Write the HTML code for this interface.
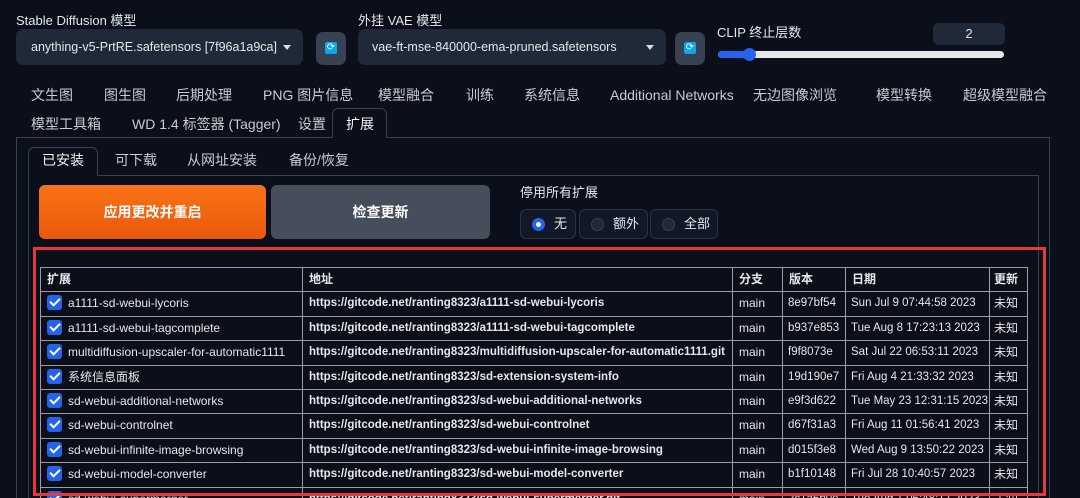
<!DOCTYPE html>
<html><head><meta charset="utf-8"><style>
*{box-sizing:border-box;margin:0;padding:0}
html,body{width:1080px;height:498px;overflow:hidden}
body{background:#0b0f19;color:#e5e7eb;font-family:"Liberation Sans","Noto Sans CJK SC",sans-serif;position:relative;font-size:13px;line-height:1.2}
.a{position:absolute;white-space:nowrap}
.dd{position:absolute;background:#1f2937;border-radius:7px;height:36px;top:29px;font-size:12.5px;line-height:36px;color:#e5e7eb;padding-left:15px}
.dd .car{position:absolute;right:12px;top:16px;width:0;height:0;border-left:4px solid transparent;border-right:4px solid transparent;border-top:5px solid #ddd}
.rf{position:absolute;top:32px;width:30px;height:33px;background:#374151;border-radius:7px}
.rf i{position:absolute;left:9px;top:10px;width:12px;height:12px;background:#0ea5e9;border-radius:2px;color:#fff;font-size:10px;line-height:12px;text-align:center;font-style:normal}
.tab{position:absolute;font-size:14px;color:#c9ccd1}
table{position:absolute;left:40px;top:267px;border-collapse:collapse;font-size:12px;color:#e5e7eb;table-layout:fixed;width:987px}
td,th{border:1px solid #9a9ea6;height:24.4px;padding:0 6px;text-align:left;white-space:nowrap;overflow:hidden;vertical-align:top;line-height:23px;font-family:"Liberation Sans",sans-serif}
td:first-child,th,td.z{font-family:"Liberation Sans","Noto Sans CJK SC",sans-serif}
th{font-weight:bold}
td.u{font-weight:bold;font-size:11.5px}
td.s{font-size:11.5px;padding:0 5px}
td.z{padding:0 4px}
.cb{display:inline-block;width:15px;height:15px;background:#2563eb;border-radius:3px;vertical-align:-3px;margin-right:6px;position:relative}
.cb:after{content:"";position:absolute;left:5px;top:1px;width:4px;height:8px;border:solid #fff;border-width:0 2px 2px 0;transform:rotate(45deg)}
.radio{position:absolute;top:209px;height:30px;background:#111827;border:1px solid #2b3341;border-radius:6px}
.radio .c{position:absolute;left:11px;top:8px;width:13px;height:13px;border-radius:50%;background:#1f2937;border:1px solid #374151}
.radio span{position:absolute;left:33px;top:6px;font-size:13px}
</style></head><body>
<div class="a" style="left:16px;top:13px;font-size:13px">Stable Diffusion 模型</div>
<div class="dd" style="left:16px;width:287px">anything-v5-PrtRE.safetensors [7f96a1a9ca]<span class="car"></span></div>
<div class="rf" style="left:316px"><i>⟳</i></div>
<div class="a" style="left:358px;top:13px;font-size:13px">外挂 VAE 模型</div>
<div class="dd" style="left:358px;width:308px;padding-left:14px">vae-ft-mse-840000-ema-pruned.safetensors<span class="car"></span></div>
<div class="rf" style="left:675px"><i>⟳</i></div>
<div class="a" style="left:717px;top:25px;font-size:13px">CLIP 终止层数</div>
<div class="a" style="left:933px;top:23px;width:72px;height:22px;background:#1f2937;border-radius:6px;text-align:center;line-height:22px;font-size:13px">2</div>
<div class="a" style="left:718px;top:51px;width:286px;height:7px;background:#e5e7eb;border-radius:4px"></div>
<div class="a" style="left:718px;top:51px;width:32px;height:7px;background:#2563eb;border-radius:4px"></div>
<div class="a" style="left:743px;top:48px;width:13px;height:13px;background:#2563eb;border-radius:50%"></div>

<div class="tab" style="left:31px;top:87px">文生图</div>
<div class="tab" style="left:104px;top:87px">图生图</div>
<div class="tab" style="left:176px;top:87px">后期处理</div>
<div class="tab" style="left:263px;top:87px">PNG 图片信息</div>
<div class="tab" style="left:378px;top:87px">模型融合</div>
<div class="tab" style="left:466px;top:87px">训练</div>
<div class="tab" style="left:524px;top:87px">系统信息</div>
<div class="tab" style="left:610px;top:87px">Additional Networks</div>
<div class="tab" style="left:753px;top:87px">无边图像浏览</div>
<div class="tab" style="left:876px;top:87px">模型转换</div>
<div class="tab" style="left:963px;top:87px">超级模型融合</div>
<div class="tab" style="left:31px;top:116px">模型工具箱</div>
<div class="tab" style="left:132px;top:116px">WD 1.4 标签器 (Tagger)</div>
<div class="tab" style="left:298px;top:116px">设置</div>
<div class="a" style="left:16px;top:137px;width:1034px;height:370px;border:1px solid #374151"></div>
<div class="a" style="left:332px;top:108px;width:55px;height:30px;border:1px solid #374151;border-bottom:none;border-radius:6px 6px 0 0;background:#0b0f19"></div>
<div class="tab" style="left:346px;top:116px;color:#f3f4f6">扩展</div>

<div class="a" style="left:28px;top:175px;width:1011px;height:330px;border:1px solid #374151"></div>
<div class="a" style="left:28px;top:147px;width:70px;height:29px;border:1px solid #374151;border-bottom:none;border-radius:6px 6px 0 0;background:#0b0f19"></div>
<div class="tab" style="left:42px;top:152px;color:#f3f4f6">已安装</div>
<div class="tab" style="left:115px;top:152px">可下载</div>
<div class="tab" style="left:187px;top:152px">从网址安装</div>
<div class="tab" style="left:289px;top:152px">备份/恢复</div>

<div class="a" style="left:39px;top:185px;width:227px;height:54px;border-radius:6px;background:linear-gradient(180deg,#f97316,#ea580c);color:#fff;font-weight:bold;font-size:14px;text-align:center;line-height:54px">应用更改并重启</div>
<div class="a" style="left:271px;top:185px;width:219px;height:54px;border-radius:6px;background:#474e5b;color:#fff;font-weight:bold;font-size:14px;text-align:center;line-height:54px">检查更新</div>
<div class="a" style="left:520px;top:185px;font-size:13px">停用所有扩展</div>
<div class="radio" style="left:520px;width:56px"><div class="c" style="background:#fff;border:4px solid #2563eb"></div><span>无</span></div>
<div class="radio" style="left:579px;width:69px"><div class="c"></div><span>额外</span></div>
<div class="radio" style="left:650px;width:68px"><div class="c"></div><span>全部</span></div>

<table>
<colgroup><col style="width:262px"><col style="width:430px"><col style="width:50px"><col style="width:63px"><col style="width:144px"><col style="width:38px"></colgroup>
<tr><th>扩展</th><th>地址</th><th>分支</th><th>版本</th><th>日期</th><th style="padding:0 4px">更新</th></tr>
<tr><td><span class="cb"></span>a1111-sd-webui-lycoris</td><td class="u">https://gitcode.net/ranting8323/a1111-sd-webui-lycoris</td><td>main</td><td class="s">8e97bf54</td><td class="s">Sun Jul 9 07:44:58 2023</td><td class="z">未知</td></tr>
<tr><td><span class="cb"></span>a1111-sd-webui-tagcomplete</td><td class="u">https://gitcode.net/ranting8323/a1111-sd-webui-tagcomplete</td><td>main</td><td class="s">b937e853</td><td class="s">Tue Aug 8 17:23:13 2023</td><td class="z">未知</td></tr>
<tr><td><span class="cb"></span>multidiffusion-upscaler-for-automatic1111</td><td class="u">https://gitcode.net/ranting8323/multidiffusion-upscaler-for-automatic1111.git</td><td>main</td><td class="s">f9f8073e</td><td class="s">Sat Jul 22 06:53:11 2023</td><td class="z">未知</td></tr>
<tr><td><span class="cb"></span>系统信息面板</td><td class="u">https://gitcode.net/ranting8323/sd-extension-system-info</td><td>main</td><td class="s">19d190e7</td><td class="s">Fri Aug 4 21:33:32 2023</td><td class="z">未知</td></tr>
<tr><td><span class="cb"></span>sd-webui-additional-networks</td><td class="u">https://gitcode.net/ranting8323/sd-webui-additional-networks</td><td>main</td><td class="s">e9f3d622</td><td class="s">Tue May 23 12:31:15 2023</td><td class="z">未知</td></tr>
<tr><td><span class="cb"></span>sd-webui-controlnet</td><td class="u">https://gitcode.net/ranting8323/sd-webui-controlnet</td><td>main</td><td class="s">d67f31a3</td><td class="s">Fri Aug 11 01:56:41 2023</td><td class="z">未知</td></tr>
<tr><td><span class="cb"></span>sd-webui-infinite-image-browsing</td><td class="u">https://gitcode.net/ranting8323/sd-webui-infinite-image-browsing</td><td>main</td><td class="s">d015f3e8</td><td class="s">Wed Aug 9 13:50:22 2023</td><td class="z">未知</td></tr>
<tr><td><span class="cb"></span>sd-webui-model-converter</td><td class="u">https://gitcode.net/ranting8323/sd-webui-model-converter</td><td>main</td><td class="s">b1f10148</td><td class="s">Fri Jul 28 10:40:57 2023</td><td class="z">未知</td></tr>
<tr><td><span class="cb"></span>sd-webui-supermerger</td><td class="u">https://gitcode.net/ranting8323/sd-webui-supermerger.git</td><td>main</td><td class="s">2c1a5b0e</td><td class="s">Tue Aug 1 05:48:17 2023</td><td class="z">未知</td></tr>
</table>
<div class="a" style="left:33px;top:247px;width:1013px;height:249px;border:3px solid #e8383b"></div>
</body></html>
